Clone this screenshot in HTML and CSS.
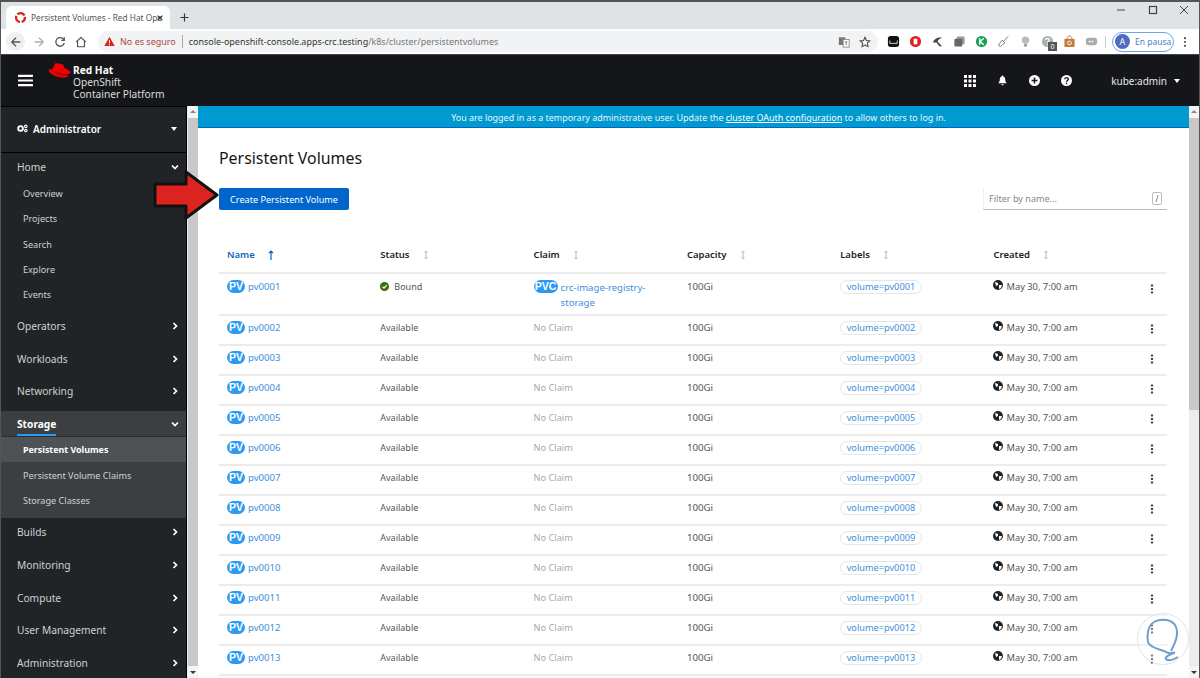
FILE: index.html
```html
<!DOCTYPE html>
<html lang="es">
<head>
<meta charset="utf-8">
<title>Persistent Volumes - Red Hat OpenShift</title>
<link rel="stylesheet" href="styles.css">
</head>
<body>
<div class="window">
  <div class="tabstrip">
    <div class="tab">
      <svg class="favicon" viewBox="0 0 16 16"><circle cx="8" cy="8" r="5.500" fill="none" stroke="#d8261c" stroke-width="2.800" stroke-dasharray="10 2" stroke-dashoffset="3"/></svg>
      <span class="tab-title">Persistent Volumes - Red Hat Ope</span>
      <svg class="tab-x" viewBox="0 0 10 10"><path d="M2 2l6 6M8 2l-6 6" stroke="#333" stroke-width="1.300"/></svg>
    </div>
    <svg class="tab-new" viewBox="0 0 10 10"><path d="M5 .5v9M.5 5h9" stroke="#333" stroke-width="1.300"/></svg>
    <div class="win-controls">
      <svg viewBox="0 0 10 10"><path d="M1 5h8" stroke="#444" stroke-width="1"/></svg>
      <svg viewBox="0 0 10 10"><rect x="1.500" y="1.500" width="7" height="7" fill="none" stroke="#444" stroke-width="1.200"/></svg>
      <svg viewBox="0 0 10 10"><path d="M1 1l8 8M9 1l-8 8" stroke="#444" stroke-width="1"/></svg>
    </div>
  </div>
  <div class="toolbar">
    <span class="nav-back"><svg viewBox="0 0 14 14"><path d="M12 7H2.500M7 2L2 7l5 5" fill="none" stroke="#555" stroke-width="1.500"/></svg></span>
    <svg class="nav nav-fwd" viewBox="0 0 14 14"><path d="M2 7h9.500M7 2l5 5-5 5" fill="none" stroke="#b0b0b0" stroke-width="1.500"/></svg>
    <svg class="nav" viewBox="0 0 14 14"><path d="M11.500 4.500A5 5 0 1 0 12 8M12 1.500v3.500H8.500" fill="none" stroke="#555" stroke-width="1.500"/></svg>
    <svg class="nav" viewBox="0 0 14 14"><path d="M1.500 7L7 1.500 12.500 7M3 6v6.500h8V6" fill="none" stroke="#555" stroke-width="1.300"/></svg>
    <div class="omnibox">
      <svg class="warn" viewBox="0 0 12 12"><path d="M6 .8L11.700 11H.3z" fill="#d8261c"/><path d="M6 4.500v3.500M6 9v1" stroke="#fff" stroke-width="1.100"/></svg>
      <span class="insecure">No es seguro</span>
      <span class="omni-sep"></span>
      <span class="url">console-openshift-console.apps-crc.testing<span class="url-path">/k8s/cluster/persistentvolumes</span></span>
      <svg class="omni-ic omni-translate" viewBox="0 0 14 14"><rect x="1" y="1.500" width="7.500" height="9" fill="#777"/><rect x="6" y="4" width="7" height="9" fill="#fff" stroke="#888"/><path d="M8 7h3M9.500 6v5" stroke="#777"/></svg>
      <svg class="omni-ic omni-star" viewBox="0 0 14 14"><path d="M7 1.500l1.700 3.700 4 .5-3 2.700.8 4L7 10.500l-3.500 1.900.8-4-3-2.700 4-.5z" fill="none" stroke="#444" stroke-width="1.200"/></svg>
    </div>
    <div class="extensions">
      <svg viewBox="0 0 14 14"><rect x="1" y="1" width="12" height="12" rx="3" fill="#111"/><path d="M3 6v3h8V6" stroke="#ddd" stroke-width="1" fill="none"/></svg>
      <svg viewBox="0 0 14 14"><circle cx="7" cy="7" r="6" fill="#e0201c"/><path d="M5 4h4v6H5z" fill="#fff"/></svg>
      <svg viewBox="0 0 14 14"><path d="M2 8c2-5 6-6 10-5-3 1-4 2-5 4l5 5H9L6 8z" fill="#444"/></svg>
      <svg viewBox="0 0 14 14"><rect x="4" y="1.500" width="8.500" height="8.500" rx="1.500" fill="#999"/><rect x="1.500" y="4" width="8.500" height="8.500" rx="1.500" fill="#666"/></svg>
      <svg viewBox="0 0 14 14"><circle cx="7" cy="7" r="6" fill="#12a150"/><path d="M5 3.500v7M9.500 3.500L5.500 7l4 3.500" stroke="#fff" stroke-width="1.600" fill="none"/></svg>
      <svg viewBox="0 0 14 14"><path d="M12 1.500L7 7M8.500 8.500L5.500 5.500 1.500 11l2 1.500z" stroke="#777" fill="#fff"/></svg>
      <svg viewBox="0 0 14 14"><circle cx="7" cy="5.500" r="4" fill="#bbb"/><rect x="5.500" y="9.500" width="3" height="3" fill="#999"/></svg>
      <span class="ext-q"><svg viewBox="0 0 14 14"><circle cx="7" cy="7" r="6" fill="#a9b0b5"/><path d="M5 5.500c0-2.500 4-2.500 4 0 0 1.500-2 1.500-2 3M7 10v1" stroke="#fff" stroke-width="1.300" fill="none"/></svg><b class="ext-count">0</b></span>
      <svg viewBox="0 0 14 14"><rect x="1.500" y="4" width="11" height="9" rx="1" fill="#c77b3b"/><path d="M4.500 4c0-4 5-4 5 0" stroke="#c77b3b" fill="none"/><circle cx="7" cy="8.500" r="2" fill="none" stroke="#fff"/></svg>
      <svg viewBox="0 0 14 14"><rect x="1" y="3" width="12" height="8" rx="3" fill="#aaa"/><path d="M4 7h6" stroke="#fff" stroke-width="1.500" stroke-dasharray="2 1"/></svg>
    </div>
    <span class="ext-sep"></span>
    <div class="profile"><span class="avatar">A</span><span class="paused">En pausa</span></div>
    <svg class="chrome-menu" viewBox="0 0 4 14"><circle cx="2" cy="2.500" r="1.200" fill="#444"/><circle cx="2" cy="7" r="1.200" fill="#444"/><circle cx="2" cy="11.500" r="1.200" fill="#444"/></svg>
  </div>

  <header class="masthead">
    <svg class="burger" viewBox="0 0 16 14"><path d="M0 2h16M0 7h16M0 12h16" stroke="#fff" stroke-width="2.200"/></svg>
    <svg class="hat" viewBox="0 0 24 16"><path d="M7 1c2-.8 3.500.4 6 .4 2 0 3 1.500 3.500 4 2 1 4.500 2.500 6 3.700.5 1.800-1.500 3-4.500 2.900C12 11.500 5 9 3.500 7.500 3 6.500 3.500 5.500 5 5.700z" fill="#e00"/><path d="M1 6.500c-1 2 1 4.500 5 6.500 4 2 10 3 13 1.500 1.500-.7 1.500-1.500 1-2-5 1-14-2.500-17-5.500z" fill="#e00"/></svg>
    <div class="brand"><b class="brand-rh">Red Hat</b><span>OpenShift</span><span>Container Platform</span></div>
    <div class="mast-tools">
      <svg class="grid-ic" viewBox="0 0 12 12"><path d="M0 0h3v3H0zM4.500 0h3v3h-3zM9 0h3v3H9zM0 4.500h3v3H0zM4.500 4.500h3v3h-3zM9 4.500h3v3H9zM0 9h3v3H0zM4.500 9h3v3h-3zM9 9h3v3H9z" fill="#fff"/></svg>
      <svg class="mast-ic" viewBox="0 0 12 12"><path d="M6 .5c-.6 0-1 .4-1 1C3.500 2 3 3.500 3 5c0 2-.7 3-1.700 4h9.400C9.700 8 9 7 9 5c0-1.500-.5-3-2-3.500 0-.6-.4-1-1-1zM4.700 10a1.300 1.300 0 0 0 2.600 0z" fill="#fff"/></svg>
      <svg class="mast-ic" viewBox="0 0 12 12"><circle cx="6" cy="6" r="6" fill="#fff"/><path d="M6 2.800v6.400M2.800 6h6.400" stroke="#151619" stroke-width="1.700"/></svg>
      <svg class="mast-ic" viewBox="0 0 12 12"><circle cx="6" cy="6" r="6" fill="#fff"/><path d="M4 4.700C4 2.200 8 2.200 8 4.500 8 6 6 5.900 6 7.500M6 8.500V10" stroke="#151619" stroke-width="1.500" fill="none"/></svg>
    </div>
    <span class="user">kube:admin</span>
    <span class="caret"></span>
  </header>

  <div class="app">
    <nav class="sidebar">
      <div class="perspective"><svg class="cogs" viewBox="0 0 14 11"><circle cx="4.500" cy="5.500" r="3" fill="none" stroke="#fff" stroke-width="2.400"/><circle cx="11.200" cy="2.800" r="1.600" fill="none" stroke="#fff" stroke-width="1.400"/><circle cx="11.200" cy="8.200" r="1.600" fill="none" stroke="#fff" stroke-width="1.400"/></svg><span class="persp-name">Administrator</span><span class="caret"></span></div>
      <div class="nav-main nav-home">Home<svg class="chev" viewBox="0 0 8 8"><path d="M1 2.500l3 3 3-3" fill="none" stroke="#fff" stroke-width="1.700"/></svg></div>
      <div class="sub-list">
        <a class="sub">Overview</a>
        <a class="sub">Projects</a>
        <a class="sub">Search</a>
        <a class="sub">Explore</a>
        <a class="sub">Events</a>
      </div>
      <div class="nav-main nav-first">Operators<svg class="chev" viewBox="0 0 8 8"><path d="M2.500 1l3 3-3 3" fill="none" stroke="#fff" stroke-width="1.700"/></svg></div>
      <div class="nav-main">Workloads<svg class="chev" viewBox="0 0 8 8"><path d="M2.500 1l3 3-3 3" fill="none" stroke="#fff" stroke-width="1.700"/></svg></div>
      <div class="nav-main">Networking<svg class="chev" viewBox="0 0 8 8"><path d="M2.500 1l3 3-3 3" fill="none" stroke="#fff" stroke-width="1.700"/></svg></div>
      <div class="storage">
        <div class="nav-main nav-open"><span class="nav-open-label">Storage</span><svg class="chev" viewBox="0 0 8 8"><path d="M1 2.500l3 3 3-3" fill="none" stroke="#fff" stroke-width="1.700"/></svg></div>
        <div class="sub-list">
          <a class="sub sub-active">Persistent Volumes</a>
          <a class="sub">Persistent Volume Claims</a>
          <a class="sub">Storage Classes</a>
        </div>
      </div>
      <div class="nav-main nav-after">Builds<svg class="chev" viewBox="0 0 8 8"><path d="M2.500 1l3 3-3 3" fill="none" stroke="#fff" stroke-width="1.700"/></svg></div>
      <div class="nav-main">Monitoring<svg class="chev" viewBox="0 0 8 8"><path d="M2.500 1l3 3-3 3" fill="none" stroke="#fff" stroke-width="1.700"/></svg></div>
      <div class="nav-main">Compute<svg class="chev" viewBox="0 0 8 8"><path d="M2.500 1l3 3-3 3" fill="none" stroke="#fff" stroke-width="1.700"/></svg></div>
      <div class="nav-main">User Management<svg class="chev" viewBox="0 0 8 8"><path d="M2.500 1l3 3-3 3" fill="none" stroke="#fff" stroke-width="1.700"/></svg></div>
      <div class="nav-main">Administration<svg class="chev" viewBox="0 0 8 8"><path d="M2.500 1l3 3-3 3" fill="none" stroke="#fff" stroke-width="1.700"/></svg></div>
    </nav>
    <div class="scrollbar scrollbar-left"><span class="sb-btn sb-up"></span><span class="sb-thumb"></span><span class="sb-btn sb-down"></span></div>
    <main class="main">
      <div class="banner">You are logged in as a temporary administrative user. Update the <a class="banner-link">cluster OAuth configuration</a> to allow others to log in.</div>
      <div class="content">
        <h1 class="title">Persistent Volumes</h1>
        <div class="actions">
          <button class="create">Create Persistent Volume</button>
          <div class="filter"><span class="filter-text">Filter by name...</span><span class="kbd">/</span></div>
        </div>
        <div class="table">
          <div class="row head">
            <span class="th th-active">Name<svg class="sort" viewBox="0 0 6 10"><path d="M3 10V1M1 3l2-2 2 2" fill="none" stroke="#06c" stroke-width="1.200"/></svg></span>
            <span class="th">Status<svg class="sort" viewBox="0 0 6 10"><path d="M3 1v8M1.500 2.500L3 1l1.500 1.500M1.500 7.500L3 9l1.500-1.500" fill="none" stroke="#b8b8b8" stroke-width="1"/></svg></span>
            <span class="th">Claim<svg class="sort" viewBox="0 0 6 10"><path d="M3 1v8M1.500 2.500L3 1l1.500 1.500M1.500 7.500L3 9l1.500-1.500" fill="none" stroke="#b8b8b8" stroke-width="1"/></svg></span>
            <span class="th">Capacity<svg class="sort" viewBox="0 0 6 10"><path d="M3 1v8M1.500 2.500L3 1l1.500 1.500M1.500 7.500L3 9l1.500-1.500" fill="none" stroke="#b8b8b8" stroke-width="1"/></svg></span>
            <span class="th">Labels<svg class="sort" viewBox="0 0 6 10"><path d="M3 1v8M1.500 2.500L3 1l1.500 1.500M1.500 7.500L3 9l1.500-1.500" fill="none" stroke="#b8b8b8" stroke-width="1"/></svg></span>
            <span class="th">Created<svg class="sort" viewBox="0 0 6 10"><path d="M3 1v8M1.500 2.500L3 1l1.500 1.500M1.500 7.500L3 9l1.500-1.500" fill="none" stroke="#b8b8b8" stroke-width="1"/></svg></span>
          </div>
          <div class="row row-tall">
            <span class="cell"><b class="badge">PV</b><a class="link">pv0001</a></span>
            <span class="cell cell-status"><svg class="ok" viewBox="0 0 10 10"><circle cx="5" cy="5" r="5" fill="#3e6b12"/><path d="M2.700 5.200l1.700 1.600 3-3.200" fill="none" stroke="#fff" stroke-width="1.300"/></svg>Bound</span>
            <span class="cell cell-claim"><b class="badge badge-pvc">PVC</b><a class="link link-wrap">crc-image-registry-storage</a></span>
            <span class="cell">100Gi</span>
            <span class="cell"><a class="pill">volume=pv0001</a></span>
            <span class="cell cell-created"><svg class="globe" viewBox="0 0 10 10"><circle cx="5" cy="5" r="5" fill="#222"/><path d="M2 2l3 1 0 2-2 1zM6 5l3 0-1 3-2 1z" fill="#fff"/></svg>May 30, 7:00 am</span>
            <svg class="kebab" viewBox="0 0 4 12"><path d="M.7 .5h2.600v2.600H.7zM.7 4.700h2.600v2.600H.7zM.7 8.900h2.600v2.600H.7z" fill="#444"/></svg>
          </div>
          <div class="row"><span class="cell"><b class="badge">PV</b><a class="link">pv0002</a></span><span class="cell">Available</span><span class="cell cell-none">No Claim</span><span class="cell">100Gi</span><span class="cell"><a class="pill">volume=pv0002</a></span><span class="cell cell-created"><svg class="globe" viewBox="0 0 10 10"><circle cx="5" cy="5" r="5" fill="#222"/><path d="M2 2l3 1 0 2-2 1zM6 5l3 0-1 3-2 1z" fill="#fff"/></svg>May 30, 7:00 am</span><svg class="kebab" viewBox="0 0 4 12"><path d="M.7 .5h2.600v2.600H.7zM.7 4.700h2.600v2.600H.7zM.7 8.900h2.600v2.600H.7z" fill="#444"/></svg></div>
          <div class="row"><span class="cell"><b class="badge">PV</b><a class="link">pv0003</a></span><span class="cell">Available</span><span class="cell cell-none">No Claim</span><span class="cell">100Gi</span><span class="cell"><a class="pill">volume=pv0003</a></span><span class="cell cell-created"><svg class="globe" viewBox="0 0 10 10"><circle cx="5" cy="5" r="5" fill="#222"/><path d="M2 2l3 1 0 2-2 1zM6 5l3 0-1 3-2 1z" fill="#fff"/></svg>May 30, 7:00 am</span><svg class="kebab" viewBox="0 0 4 12"><path d="M.7 .5h2.600v2.600H.7zM.7 4.700h2.600v2.600H.7zM.7 8.900h2.600v2.600H.7z" fill="#444"/></svg></div>
          <div class="row"><span class="cell"><b class="badge">PV</b><a class="link">pv0004</a></span><span class="cell">Available</span><span class="cell cell-none">No Claim</span><span class="cell">100Gi</span><span class="cell"><a class="pill">volume=pv0004</a></span><span class="cell cell-created"><svg class="globe" viewBox="0 0 10 10"><circle cx="5" cy="5" r="5" fill="#222"/><path d="M2 2l3 1 0 2-2 1zM6 5l3 0-1 3-2 1z" fill="#fff"/></svg>May 30, 7:00 am</span><svg class="kebab" viewBox="0 0 4 12"><path d="M.7 .5h2.600v2.600H.7zM.7 4.700h2.600v2.600H.7zM.7 8.900h2.600v2.600H.7z" fill="#444"/></svg></div>
          <div class="row"><span class="cell"><b class="badge">PV</b><a class="link">pv0005</a></span><span class="cell">Available</span><span class="cell cell-none">No Claim</span><span class="cell">100Gi</span><span class="cell"><a class="pill">volume=pv0005</a></span><span class="cell cell-created"><svg class="globe" viewBox="0 0 10 10"><circle cx="5" cy="5" r="5" fill="#222"/><path d="M2 2l3 1 0 2-2 1zM6 5l3 0-1 3-2 1z" fill="#fff"/></svg>May 30, 7:00 am</span><svg class="kebab" viewBox="0 0 4 12"><path d="M.7 .5h2.600v2.600H.7zM.7 4.700h2.600v2.600H.7zM.7 8.900h2.600v2.600H.7z" fill="#444"/></svg></div>
          <div class="row"><span class="cell"><b class="badge">PV</b><a class="link">pv0006</a></span><span class="cell">Available</span><span class="cell cell-none">No Claim</span><span class="cell">100Gi</span><span class="cell"><a class="pill">volume=pv0006</a></span><span class="cell cell-created"><svg class="globe" viewBox="0 0 10 10"><circle cx="5" cy="5" r="5" fill="#222"/><path d="M2 2l3 1 0 2-2 1zM6 5l3 0-1 3-2 1z" fill="#fff"/></svg>May 30, 7:00 am</span><svg class="kebab" viewBox="0 0 4 12"><path d="M.7 .5h2.600v2.600H.7zM.7 4.700h2.600v2.600H.7zM.7 8.900h2.600v2.600H.7z" fill="#444"/></svg></div>
          <div class="row"><span class="cell"><b class="badge">PV</b><a class="link">pv0007</a></span><span class="cell">Available</span><span class="cell cell-none">No Claim</span><span class="cell">100Gi</span><span class="cell"><a class="pill">volume=pv0007</a></span><span class="cell cell-created"><svg class="globe" viewBox="0 0 10 10"><circle cx="5" cy="5" r="5" fill="#222"/><path d="M2 2l3 1 0 2-2 1zM6 5l3 0-1 3-2 1z" fill="#fff"/></svg>May 30, 7:00 am</span><svg class="kebab" viewBox="0 0 4 12"><path d="M.7 .5h2.600v2.600H.7zM.7 4.700h2.600v2.600H.7zM.7 8.900h2.600v2.600H.7z" fill="#444"/></svg></div>
          <div class="row"><span class="cell"><b class="badge">PV</b><a class="link">pv0008</a></span><span class="cell">Available</span><span class="cell cell-none">No Claim</span><span class="cell">100Gi</span><span class="cell"><a class="pill">volume=pv0008</a></span><span class="cell cell-created"><svg class="globe" viewBox="0 0 10 10"><circle cx="5" cy="5" r="5" fill="#222"/><path d="M2 2l3 1 0 2-2 1zM6 5l3 0-1 3-2 1z" fill="#fff"/></svg>May 30, 7:00 am</span><svg class="kebab" viewBox="0 0 4 12"><path d="M.7 .5h2.600v2.600H.7zM.7 4.700h2.600v2.600H.7zM.7 8.900h2.600v2.600H.7z" fill="#444"/></svg></div>
          <div class="row"><span class="cell"><b class="badge">PV</b><a class="link">pv0009</a></span><span class="cell">Available</span><span class="cell cell-none">No Claim</span><span class="cell">100Gi</span><span class="cell"><a class="pill">volume=pv0009</a></span><span class="cell cell-created"><svg class="globe" viewBox="0 0 10 10"><circle cx="5" cy="5" r="5" fill="#222"/><path d="M2 2l3 1 0 2-2 1zM6 5l3 0-1 3-2 1z" fill="#fff"/></svg>May 30, 7:00 am</span><svg class="kebab" viewBox="0 0 4 12"><path d="M.7 .5h2.600v2.600H.7zM.7 4.700h2.600v2.600H.7zM.7 8.900h2.600v2.600H.7z" fill="#444"/></svg></div>
          <div class="row"><span class="cell"><b class="badge">PV</b><a class="link">pv0010</a></span><span class="cell">Available</span><span class="cell cell-none">No Claim</span><span class="cell">100Gi</span><span class="cell"><a class="pill">volume=pv0010</a></span><span class="cell cell-created"><svg class="globe" viewBox="0 0 10 10"><circle cx="5" cy="5" r="5" fill="#222"/><path d="M2 2l3 1 0 2-2 1zM6 5l3 0-1 3-2 1z" fill="#fff"/></svg>May 30, 7:00 am</span><svg class="kebab" viewBox="0 0 4 12"><path d="M.7 .5h2.600v2.600H.7zM.7 4.700h2.600v2.600H.7zM.7 8.900h2.600v2.600H.7z" fill="#444"/></svg></div>
          <div class="row"><span class="cell"><b class="badge">PV</b><a class="link">pv0011</a></span><span class="cell">Available</span><span class="cell cell-none">No Claim</span><span class="cell">100Gi</span><span class="cell"><a class="pill">volume=pv0011</a></span><span class="cell cell-created"><svg class="globe" viewBox="0 0 10 10"><circle cx="5" cy="5" r="5" fill="#222"/><path d="M2 2l3 1 0 2-2 1zM6 5l3 0-1 3-2 1z" fill="#fff"/></svg>May 30, 7:00 am</span><svg class="kebab" viewBox="0 0 4 12"><path d="M.7 .5h2.600v2.600H.7zM.7 4.700h2.600v2.600H.7zM.7 8.900h2.600v2.600H.7z" fill="#444"/></svg></div>
          <div class="row"><span class="cell"><b class="badge">PV</b><a class="link">pv0012</a></span><span class="cell">Available</span><span class="cell cell-none">No Claim</span><span class="cell">100Gi</span><span class="cell"><a class="pill">volume=pv0012</a></span><span class="cell cell-created"><svg class="globe" viewBox="0 0 10 10"><circle cx="5" cy="5" r="5" fill="#222"/><path d="M2 2l3 1 0 2-2 1zM6 5l3 0-1 3-2 1z" fill="#fff"/></svg>May 30, 7:00 am</span><svg class="kebab" viewBox="0 0 4 12"><path d="M.7 .5h2.600v2.600H.7zM.7 4.700h2.600v2.600H.7zM.7 8.900h2.600v2.600H.7z" fill="#444"/></svg></div>
          <div class="row"><span class="cell"><b class="badge">PV</b><a class="link">pv0013</a></span><span class="cell">Available</span><span class="cell cell-none">No Claim</span><span class="cell">100Gi</span><span class="cell"><a class="pill">volume=pv0013</a></span><span class="cell cell-created"><svg class="globe" viewBox="0 0 10 10"><circle cx="5" cy="5" r="5" fill="#222"/><path d="M2 2l3 1 0 2-2 1zM6 5l3 0-1 3-2 1z" fill="#fff"/></svg>May 30, 7:00 am</span><svg class="kebab" viewBox="0 0 4 12"><path d="M.7 .5h2.600v2.600H.7zM.7 4.700h2.600v2.600H.7zM.7 8.900h2.600v2.600H.7z" fill="#444"/></svg></div>
        </div>
      </div>
    </main>
    <div class="scrollbar scrollbar-right"><span class="sb-btn sb-up"></span><span class="sb-thumb sb-thumb-right"></span><span class="sb-track"></span><span class="sb-btn sb-down"></span></div>
  </div>

  <svg class="arrow" viewBox="0 0 66 50"><path d="M2 14h31V2l31 23-31 23V36H2z" fill="#dd2320" stroke="#111" stroke-width="3" stroke-linejoin="round"/></svg>
  <svg class="watermark" viewBox="0 0 52 52"><circle cx="26" cy="26" r="25.500" fill="rgba(255,255,255,.3)" stroke="#dbe6f2" stroke-width="1"/><path d="M34 38C38 30 42 22 39 14 36 6 24 5 17 9 10 13 10 24 11 29 13 35 22 36 27 38 30 39 31 41 35 40L38 39.500C34 41 27 44 29 46 31 48 36 47 41 44" fill="none" stroke="#6f9ecb" stroke-width="2"/></svg>
</div>
</body>
</html>
```
FILE: styles.css
```css
* { box-sizing: border-box; }
html, body { margin: 0; height: 100%; overflow: hidden; }
body { font-family: "Noto Sans", "Open Sans", sans-serif; font-size: 10px; color: #555; background: #fff; }
a { color: inherit; text-decoration: none; }
svg { display: block; flex: none; }

.window { position: relative; width: 1200px; height: 678px; display: flex; flex-direction: column; overflow: hidden; border: 1px solid #555; border-top-width: 2px; border-bottom: 0; }

.tabstrip { flex: none; height: 27px; background: #dee4e6; display: flex; align-items: flex-end; padding-left: 5px; }
.tab { width: 164px; height: 23px; background: #fff; border-radius: 6px 6px 0 0; display: flex; align-items: center; padding: 0 6px 0 8px; }
.favicon { width: 13px; height: 13px; }
.tab-title { margin-left: 4px; width: 121px; font-size: 8.300px; color: #555; white-space: nowrap; }
.tab-x { width: 8px; height: 8px; margin-left: 4px; }
.tab-new { width: 9px; height: 9px; margin: 0 0 7px 10px; }
.win-controls { margin-left: auto; align-self: flex-start; display: flex; gap: 21.500px; padding: 3px 10px 0 0; }
.win-controls svg { width: 10px; height: 10px; }

.toolbar { flex: none; height: 26px; background: #fff; display: flex; align-items: center; padding-left: 5px; border-bottom: 1px solid #444; }
.nav-back { width: 19px; height: 19px; background: #f0f0f0; border-radius: 50%; display: flex; align-items: center; justify-content: center; }
.nav-back svg { width: 12px; height: 12px; }
.nav { width: 12px; height: 12px; margin-left: 9px; }
.nav-fwd { margin-left: 8px; }
.omnibox { flex: none; width: 780px; height: 21px; margin-left: 11px; background: #f1f3f4; border-radius: 11px; display: flex; align-items: center; padding-left: 6px; }
.warn { width: 11px; height: 11px; }
.insecure { margin-left: 5px; font-size: 9px; color: #b0473d; white-space: nowrap; }
.omni-sep { width: 1px; height: 13px; background: #aaa; margin: 0 6px; }
.url { font-size: 8.950px; color: #333; white-space: nowrap; }
.url-path { color: #777; }
.omni-ic { width: 12px; height: 12px; }
.omni-translate { margin-left: auto; }
.omni-star { margin: 0 7px 0 9px; }
.extensions { display: flex; align-items: center; gap: 9px; margin-left: 9px; }
.extensions svg { width: 13px; height: 13px; }
.ext-q { position: relative; display: block; width: 13px; height: 13px; }
.ext-count { position: absolute; left: 7px; top: 7px; width: 9px; height: 9px; background: #555; color: #fff; font-size: 7px; line-height: 9px; text-align: center; font-weight: 400; }
.ext-sep { width: 1px; height: 12px; background: #ccc; margin-left: 7px; }
.profile { flex: none; height: 20px; width: 62px; margin-left: 6px; border: 1px solid #6aa6e8; border-radius: 10px; display: flex; align-items: center; padding-left: 2px; }
.avatar { width: 15px; height: 15px; border-radius: 50%; background: #4f6bc0; color: #fff; font-size: 9px; line-height: 15px; text-align: center; }
.paused { margin-left: 5px; font-size: 8.500px; color: #4a84c4; white-space: nowrap; }
.chrome-menu { width: 4px; height: 12px; margin-left: 9px; }

.masthead { flex: none; height: 51px; background: #151619; display: flex; align-items: center; padding-left: 17px; color: #fff; }
.burger { width: 15px; height: 13px; }
.hat { width: 24px; height: 17px; margin: -20px 0 0 15px; }
.brand { margin: 5px 0 0 1px; display: flex; flex-direction: column; font-size: 10.200px; line-height: 11.700px; color: #ddd; white-space: nowrap; }
.brand-rh { color: #fff; font-weight: 700; }
.mast-tools { margin-left: auto; display: flex; align-items: center; gap: 21px; }
.grid-ic { width: 12px; height: 12px; }
.mast-ic { width: 11px; height: 11px; }
.user { margin-left: 39px; font-size: 10px; color: #e8e8e8; }
.caret { display: block; width: 0; height: 0; border-left: 3.500px solid transparent; border-right: 3.500px solid transparent; border-top: 4px solid #fff; margin-left: 7px; }
.masthead .caret { margin-right: 19px; }

.app { flex: 1; min-height: 0; display: flex; }
.sidebar { flex: none; width: 186px; background: #212427; color: #d6d6d6; border-right: 1px solid #000; display: flex; flex-direction: column; border-top: 1px solid #000; }
.perspective { flex: none; height: 46px; padding: 0 9px 2px 16px; display: flex; align-items: center; border-bottom: 1px solid #000; color: #fff; font-size: 10px; }
.cogs { width: 11px; height: 9px; }
.persp-name { margin-left: 5px; font-weight: 600; }
.perspective .caret { margin-left: auto; }
.nav-main { flex: none; height: 32.700px; padding: 0 7px 0 16px; display: flex; align-items: center; justify-content: space-between; font-size: 10.200px; color: #d0d0d0; }
.nav-home { height: 28px; }
.nav-first { margin-top: 2px; }
.chev { width: 8px; height: 8px; }
.sub-list { display: flex; flex-direction: column; }
.sub { height: 25.300px; padding-left: 22px; display: flex; align-items: center; font-size: 9.100px; color: #d0d0d0; }
.storage { background: #3c3f42; margin-top: 3.600px; padding-bottom: 5px; }
.nav-open { height: 26px; color: #fff; font-weight: 700; border-bottom: 1px solid #2a2c2f; }
.nav-open-label { position: relative; }
.nav-open-label::after { content: ""; position: absolute; left: 0; right: 0; bottom: -5px; height: 2px; background: #2b9af3; }
.sub-active { background: #4f5255; color: #fff; font-weight: 700; font-size: 8.900px; }
.nav-after { height: 30.700px; padding-bottom: 2px; }

.scrollbar { flex: none; width: 11px; display: flex; flex-direction: column; background: #f0f0f0; }
.scrollbar-left { border-left: 1px solid #eee; }
.sb-btn { flex: none; height: 12px; background: #f5f5f5; position: relative; }
.sb-up::after, .sb-down::after { content: ""; position: absolute; left: 2px; border-left: 3px solid transparent; border-right: 3px solid transparent; }
.sb-up::after { top: 4px; border-bottom: 3px solid #888; }
.sb-down::after { top: 5px; border-top: 3px solid #333; }
.sb-thumb { flex: 1; background: #c8c8c8; }
.sb-thumb-right { flex: none; height: 292px; }
.sb-track { flex: 1; background: #ececec; }
.scrollbar-right { width: 10px; }

.main { flex: 1; min-width: 0; display: flex; flex-direction: column; background: #fff; }
.banner { flex: none; height: 22px; padding: 1px 0 0 10px; background: #009ad0; border-bottom: 1px solid #06c; color: #e9f6fb; font-size: 8.950px; display: flex; align-items: center; justify-content: center; white-space: pre; }
.banner-link { color: #fff; text-decoration: underline; }
.content { flex: 1; padding: 0 22px 0 21px; }
.title { margin: 20px 0 0; font-size: 15.900px; line-height: 20px; font-weight: 400; color: #151515; }
.actions { display: flex; justify-content: space-between; align-items: flex-start; margin-top: 20px; }
.create { height: 22px; width: 130px; border: 0; padding: 0; border-radius: 2px; background: #06c; color: #fff; font: 9.100px "Noto Sans", sans-serif; }
.filter { width: 184px; height: 22px; border-left: 1px solid #eee; border-bottom: 1px solid #b8bbbe; display: flex; align-items: center; justify-content: space-between; padding: 0 5px; }
.filter-text { color: #888; font-size: 9.100px; }
.kbd { width: 10px; height: 13px; border: 1px solid #bbb; border-radius: 2px; font-size: 8px; line-height: 11px; text-align: center; color: #555; }

.table { margin-top: 35px; }
.row { position: relative; display: grid; grid-template-columns: repeat(6, 153.300px) 1fr; height: 30px; padding-left: 8px; border-bottom: 2px solid #ececec; }
.head { height: 29px; align-items: center; padding-bottom: 8px; }
.row-tall { height: 42px; }
.cell { display: flex; align-items: flex-start; padding-top: 5px; white-space: nowrap; font-size: 9px; line-height: 14px; color: #555; }
.row-tall .cell { padding-top: 5.500px; }
.cell:nth-child(4) { font-size: 9.700px; }
.th { display: flex; align-items: center; font-size: 9.500px; font-weight: 600; color: #222; }
.th-active { color: #1166bb; }
.sort { width: 6px; height: 10px; margin-left: 13px; }
.badge { flex: none; width: 18px; height: 13px; border-radius: 7px; background: #2b9af3; color: #fff; font-size: 10.500px; line-height: 13px; text-align: center; font-weight: 600; margin-right: 3px; font-family: "Liberation Sans", sans-serif; }
.badge-pvc { width: 24px; }
.link { color: #3d8fde; font-size: 9.600px; }
.link-wrap { white-space: normal; width: 95px; line-height: 15px; }
.cell-claim { padding-right: 40px; }
.cell-none { color: #a8a8a8; font-size: 9.200px; }
.ok { width: 9px; height: 9px; margin: 2px 5px 0 0; }
.pill { display: block; height: 14px; padding: 0 5.500px; border: 1px solid #e4e7ea; border-radius: 7px; color: #3d8fde; line-height: 12px; font-size: 9.200px; }
.cell-created { gap: 3px; font-size: 9.300px; }
.globe { width: 10px; height: 10px; }
.kebab { position: absolute; right: 13px; top: 8px; width: 4px; height: 10px; }
.row-tall .kebab { top: 10px; }

.arrow { position: absolute; left: 152px; top: 168px; width: 66px; height: 50px; }
.watermark { position: absolute; left: 1136px; top: 611px; width: 52px; height: 52px; }
```
